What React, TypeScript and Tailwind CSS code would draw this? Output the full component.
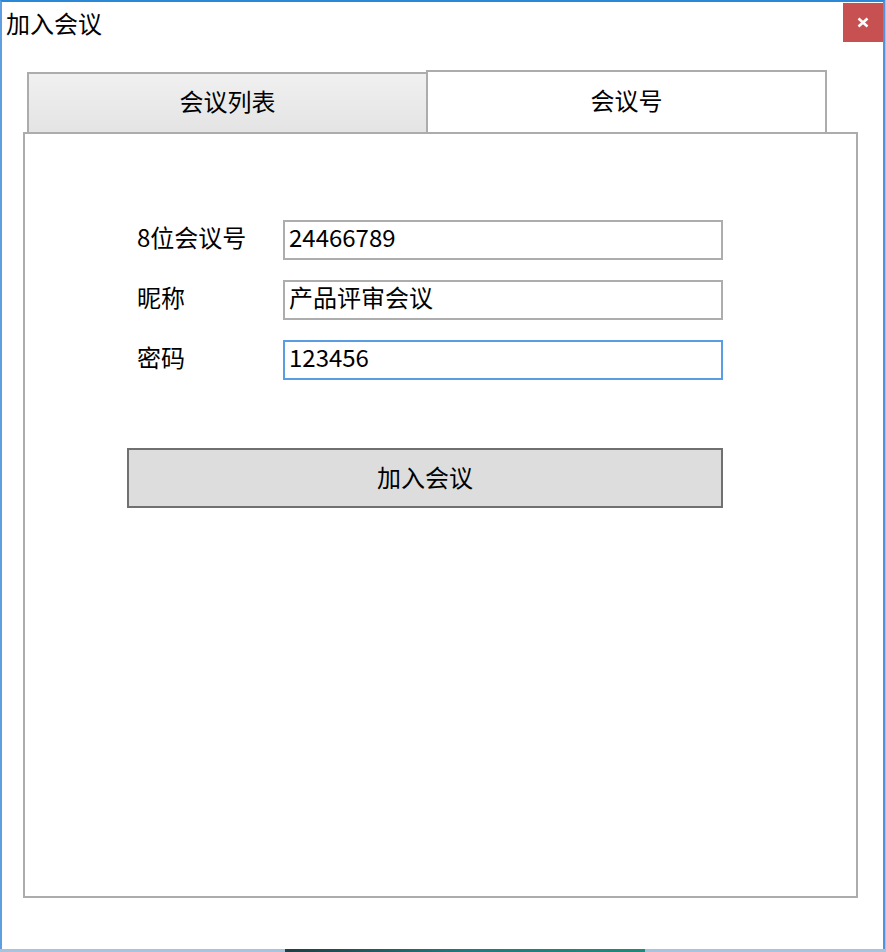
import { useState } from 'react';

const FONT = '"Microsoft YaHei", "Noto Sans CJK SC", "Noto Sans", sans-serif';

function Field({ label, value, focused }: { label: string; value: string; focused?: boolean }) {
  return (
    <div className="flex h-[40px] items-center">
      <span className="w-[156px] pb-[6px] pl-[10px] text-[24px] leading-none text-black">{label}</span>
      <div
        className={
          'flex h-[40px] w-[440px] items-center border-2 bg-white px-[4px] pb-[6px] ' +
          (focused ? 'border-[#5b9de2]' : 'border-[#adadad]')
        }
      >
        <span className="text-[24px] leading-none text-black">{value}</span>
      </div>
    </div>
  );
}

export default function App() {
  const [tab, setTab] = useState(1);

  return (
    <div className="flex h-[952px] w-[886px] flex-col bg-[#a7c3dd]" style={{ fontFamily: FONT }}>
      {/* fenêtre */}
      <div className="flex h-[949px] w-[885px] flex-col border-t-2 border-r-2 border-l-2 border-t-[#2b88d8] border-r-[#4d95dc] border-l-[#5d9fe0] bg-white">
        {/* barre de titre */}
        <div className="flex h-[42px] items-start justify-between">
          <span className="pt-[9px] pl-[4px] text-[24px] leading-none text-black">加入会议</span>
          <div className="mt-[1px] flex h-[39px] w-[40px] items-center justify-center bg-[#c75050]">
            <svg width="12" height="11" viewBox="0 0 12 11">
              <path d="M1.5 1.5 L10.5 9.5 M10.5 1.5 L1.5 9.5" stroke="white" strokeWidth="2.6" />
            </svg>
          </div>
        </div>

        {/* onglets */}
        <div className="mt-[26px] flex items-end pl-[25px]">
          <button
            onClick={() => setTab(0)}
            className={
              'flex w-[401px] items-center justify-center border-2 border-b-0 border-[#acacac] pb-[4px] text-[24px] leading-none text-black ' +
              (tab === 0 ? 'h-[62px] bg-white' : 'h-[60px] bg-gradient-to-b from-[#f0f0f0] to-[#e4e4e4]')
            }
          >
            会议列表
          </button>
          <button
            onClick={() => setTab(1)}
            className={
              '-ml-[2px] flex w-[401px] items-center justify-center border-2 border-b-0 border-[#acacac] pb-[4px] text-[24px] leading-none text-black ' +
              (tab === 1 ? 'h-[62px] bg-white' : 'h-[60px] bg-gradient-to-b from-[#f0f0f0] to-[#e4e4e4]')
            }
          >
            会议号
          </button>
        </div>

        {/* panneau */}
        <div className="ml-[21px] flex h-[766px] w-[835px] flex-col border-2 border-[#acacac] pt-[86px] pl-[102px]">
          <div className="flex flex-col gap-[20px]">
            <Field label="8位会议号" value="24466789" />
            <Field label="昵称" value="产品评审会议" />
            <Field label="密码" value="123456" focused />
          </div>
          <button className="mt-[68px] flex h-[60px] w-[596px] items-center justify-center border-2 border-[#707070] bg-[#dddddd] pb-[2px] text-[24px] leading-none text-black">
            加入会议
          </button>
        </div>
      </div>

      {/* bureau sous la fenêtre */}
      <div className="flex h-[3px]">
        <div className="w-[285px] bg-[#a7c3dd]" />
        <div className="w-[360px] bg-gradient-to-r from-[#1d3f45] via-[#1f7a80] to-[#1e8a7a]" />
        <div className="flex-1 bg-[#a7c3dd]" />
      </div>
    </div>
  );
}
